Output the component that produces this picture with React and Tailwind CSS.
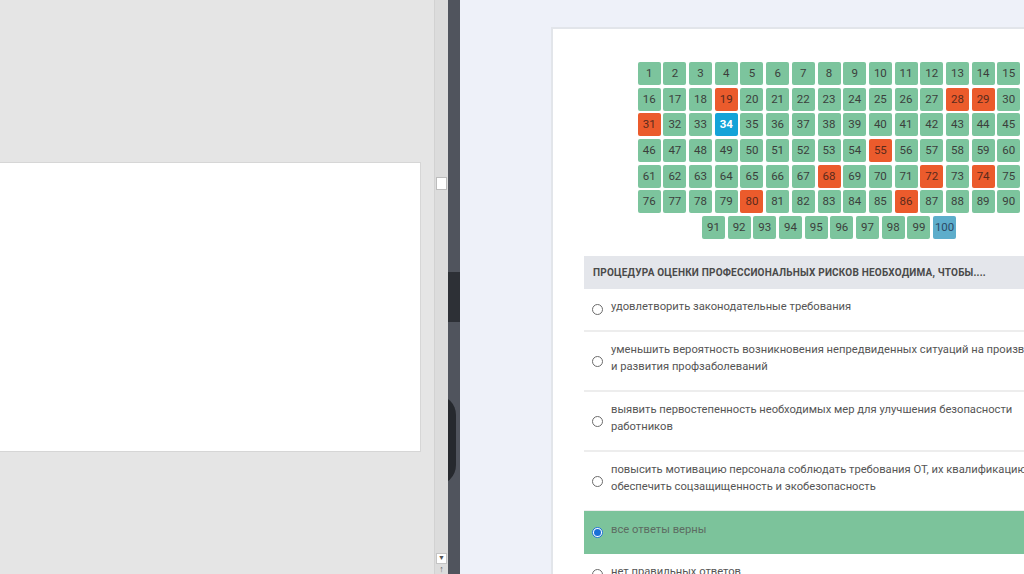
import React from 'react'

const wrong = [19, 28, 29, 31, 55, 68, 72, 74, 80, 86]

const options = [
  { text: 'удовлетворить законодательные требования' },
  { text: 'уменьшить вероятность возникновения непредвиденных ситуаций на производстве и развития профзаболеваний' },
  { text: 'выявить первостепенность необходимых мер для улучшения безопасности работников' },
  { text: 'повысить мотивацию персонала соблюдать требования ОТ, их квалификацию и обеспечить соцзащищенность и экобезопасность' },
  { text: 'все ответы верны', selected: true },
  { text: 'нет правильных ответов' },
]

function Cell({ n }) {
  let cls = 'bg-[#7cc49d] text-[#3b3f3c]'
  if (wrong.includes(n)) cls = 'bg-[#eb5b2c] text-[#5a2a1c]'
  if (n === 34) cls = 'bg-[#14a3d8] text-white font-bold'
  if (n === 100) cls = 'bg-[#5dadcb] text-[#2c4a66]'
  return (
    <div className={`w-[23px] h-[23px] rounded-[2px] flex items-center justify-center text-[11.5px] ${cls}`}>
      {n}
    </div>
  )
}

function Radio({ selected }) {
  return (
    <div className="w-[27px] flex justify-center shrink-0">
      {selected ? (
        <div className="w-[11px] h-[11px] rounded-full border border-[#1a6fd6] bg-white flex items-center justify-center">
          <div className="w-[7px] h-[7px] rounded-full bg-[#1a6fd6]" />
        </div>
      ) : (
        <div className="w-[11px] h-[11px] rounded-full border border-[#6b6b6b] bg-white" />
      )}
    </div>
  )
}

export default function App() {
  const nums = Array.from({ length: 100 }, (_, i) => i + 1)
  return (
    <div className="w-[1024px] h-[574px] flex overflow-hidden" style={{ fontFamily: 'Roboto, "Noto Sans", sans-serif' }}>
      {/* Left document view */}
      <div className="w-[434px] h-full bg-[#e5e5e5] pt-[162px] shrink-0">
        <div className="w-[421px] h-[290px] bg-white border-t border-r border-b border-[#d6d6d6]" />
      </div>

      {/* Scrollbar */}
      <div className="w-[14px] h-full bg-[#dcdcdc] flex flex-col items-center shrink-0 border-l border-[#d2d2d2]">
        <div className="mt-[177px] w-[11px] h-[13px] bg-white border border-[#bcbcbc]" />
        <div className="flex-1" />
        <div className="w-[11px] h-[11px] bg-white border border-[#c4c4c4] flex items-center justify-center text-[7px] text-[#555] leading-none">▼</div>
        <div className="h-[10px] text-[9px] text-[#666] leading-none pt-[1px]">↑</div>
      </div>

      {/* Dark divider */}
      <div className="relative w-[12px] h-full bg-[#50545d] shrink-0 overflow-hidden">
        <div className="absolute left-0 top-[272px] w-[12px] h-[50px] bg-[#2d3036]" />
        <div className="absolute left-[-32px] top-[395px] w-[40px] h-[90px] rounded-full bg-[#26292e]" />
      </div>

      {/* Right quiz view */}
      <div className="flex-1 h-full bg-[#eef1f9] pl-[91px] pt-[27px] overflow-hidden">
        <div className="w-[600px] h-[600px] bg-white border-l-2 border-t-2 border-[#e2e5ea] pt-[33px]">
          <div className="ml-[84px] w-[384px] flex flex-wrap justify-center gap-[2.7px]">
            {nums.map((n) => (
              <Cell key={n} n={n} />
            ))}
          </div>

          <div className="ml-[31px] mt-[17px]">
            <div className="h-[33px] bg-[#e4e6eb] flex items-center pl-[9px] text-[10px] font-bold text-[#4a4a4a] tracking-[0.2px] whitespace-nowrap">
              ПРОЦЕДУРА ОЦЕНКИ ПРОФЕССИОНАЛЬНЫХ РИСКОВ НЕОБХОДИМА, ЧТОБЫ....
            </div>
            {options.map((o, i) => (
              <div
                key={i}
                className={`flex items-center ${o.selected ? 'bg-[#7cc39b] mt-[-1px]' : 'border-b-2 border-[#ededed]'}`}
              >
                <Radio selected={o.selected} />
                <div
                  className={`w-[455px] text-[11.2px] leading-[17px] ${o.selected ? 'text-[#5c6b62] pt-[10px] pb-[16px]' : 'text-[#555] pt-[9px] pb-[15px]'}`}
                >
                  {o.text}
                </div>
              </div>
            ))}
          </div>
        </div>
      </div>
    </div>
  )
}
